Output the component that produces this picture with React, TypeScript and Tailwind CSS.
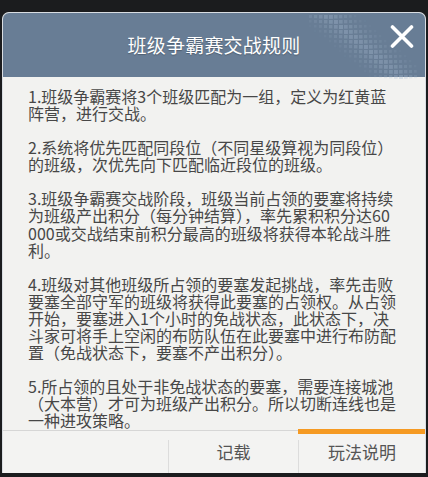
import React from 'react';

const paragraphs: string[][] = [
  ['1.班级争霸赛将3个班级匹配为一组，定义为红黄蓝', '阵营，进行交战。'],
  ['2.系统将优先匹配同段位（不同星级算视为同段位）', '的班级，次优先向下匹配临近段位的班级。'],
  [
    '3.班级争霸赛交战阶段，班级当前占领的要塞将持续',
    '为班级产出积分（每分钟结算），率先累积积分达60',
    '000或交战结束前积分最高的班级将获得本轮战斗胜',
    '利。',
  ],
  [
    '4.班级对其他班级所占领的要塞发起挑战，率先击败',
    '要塞全部守军的班级将获得此要塞的占领权。从占领',
    '开始，要塞进入1个小时的免战状态，此状态下，决',
    '斗家可将手上空闲的布防队伍在此要塞中进行布防配',
    '置（免战状态下，要塞不产出积分）。',
  ],
  [
    '5.所占领的且处于非免战状态的要塞，需要连接城池',
    '（大本营）才可为班级产出积分。所以切断连线也是',
    '一种进攻策略。',
  ],
];

// halftone band in the header corner
function Halftone() {
  const dots: React.ReactNode[] = [];
  for (let r = 0; r < 13; r++) {
    for (let c = 0; c < 22; c++) {
      const x = c * 5;
      const y = r * 5;
      const d = Math.abs(x - 18 - y * 1.2);
      if (d > 34) continue;
      const o = (1 - d / 34) * 0.35;
      const s = 2 + (1 - d / 34) * 2;
      dots.push(<rect key={`${r}-${c}`} x={x} y={y} width={s} height={s} fill="#a9bdd2" opacity={o} />);
    }
  }
  return (
    <svg className="absolute left-[306px] top-[2px]" width="110" height="64">
      {dots}
    </svg>
  );
}

export default function App() {
  return (
    <div
      className="w-[428px] h-[477px] bg-[#1b1c1e] pt-[12px] px-[2px] pb-[4px] flex"
      style={{ fontFamily: '"Noto Sans CJK SC", "Noto Sans", sans-serif' }}
    >
      <div className="flex-1 flex flex-col rounded-t-[7px] border border-[#d9dde2] border-b-0 overflow-hidden bg-[#f2f2f0]">
        <div className="relative h-[64px] shrink-0 bg-[#687d95] flex items-center justify-center">
          <Halftone />
          <span className="relative text-[19px] text-white tracking-[0.2px] [text-shadow:0_1px_1px_rgba(0,0,0,0.25)]">
            班级争霸赛交战规则
          </span>
          <svg className="absolute left-[387px] top-[12px]" width="24" height="23" viewBox="0 0 24 23">
            <path d="M2.5 2 L21.5 21 M21.5 2 L2.5 21" stroke="#fff" strokeWidth="3.6" strokeLinecap="round" />
          </svg>
        </div>
        <div className="flex-1 min-h-0 pl-[25px] pt-[11px] text-[16px] leading-[17.1px] text-[#474747] flex flex-col gap-[17px]">
          {paragraphs.map((p, i) => (
            <p key={i} className="whitespace-nowrap">
              {p.map((line, j) => (
                <span key={j} className="block">
                  {line}
                </span>
              ))}
            </p>
          ))}
        </div>
        <div className="relative h-[43px] shrink-0 border-t border-[#d6d6d6] bg-[#f3f3f2] flex text-[17px] text-[#555]">
          <div className="w-[165px]" />
          <div className="w-[130px] flex items-center justify-center border-l border-[#dcdcdc] mt-[9px]">
            <span className="-mt-[9px]">记载</span>
          </div>
          <div className="relative flex-1 flex items-center justify-center border-l border-[#dcdcdc] mt-[9px]">
            <span className="-mt-[9px]">玩法说明</span>
          </div>
          <div className="absolute left-[295px] right-0 -top-[2px] h-[5px] bg-[#f59a23]" />
        </div>
      </div>
    </div>
  );
}
